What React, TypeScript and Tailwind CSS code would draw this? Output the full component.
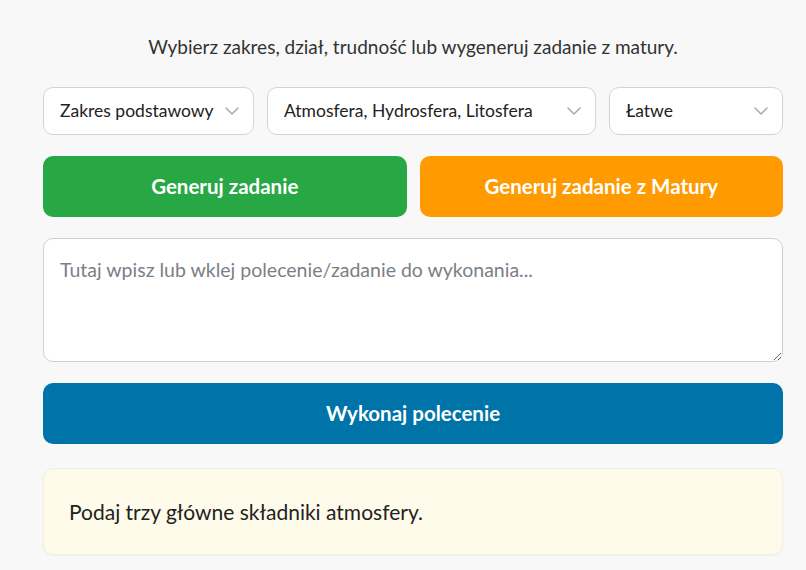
import { ChevronDown } from "lucide-react";

const font = { fontFamily: 'Lato, "Open Sans", sans-serif' };

function Select({ value, options, className }: { value: string; options: string[]; className: string }) {
  return (
    <div className={`relative ${className}`}>
      <select
        defaultValue={value}
        className="h-12 w-full appearance-none rounded-[10px] border border-[#d4d4d4] bg-white pl-4 pr-2 text-[17.5px] text-[#222] outline-none"
      >
        {options.map((o) => (
          <option key={o}>{o}</option>
        ))}
      </select>
      <ChevronDown
        className="pointer-events-none absolute right-[10px] top-1/2 h-6 w-6 -translate-y-1/2 text-[#a8a8a8]"
        strokeWidth={1.5}
      />
    </div>
  );
}

export default function App() {
  return (
    <div className="min-h-[570px] w-full bg-[#f8f8f8] pl-[43px] pr-[23px] pt-[34px]" style={font}>
      <div className="flex w-[740px] flex-col">
        <p className="text-center text-[19px] leading-[26px] text-[#333]">
          Wybierz zakres, dział, trudność lub wygeneruj zadanie z matury.
        </p>

        <div className="mt-[27px] flex gap-[13px]">
          <Select className="w-[211px]" value="Zakres podstawowy" options={["Zakres podstawowy", "Zakres rozszerzony"]} />
          <Select
            className="w-[329px]"
            value="Atmosfera, Hydrosfera, Litosfera"
            options={["Atmosfera, Hydrosfera, Litosfera"]}
          />
          <Select className="flex-1" value="Łatwe" options={["Łatwe", "Średnie", "Trudne"]} />
        </div>

        <div className="mt-[21px] flex gap-[13px]">
          <button className="h-[61px] flex-1 rounded-[10px] bg-[#28a745] text-[20.5px] font-bold text-white">
            Generuj zadanie
          </button>
          <button className="h-[61px] flex-1 rounded-[10px] bg-[#ff9a00] text-[20.5px] font-bold text-white">
            Generuj zadanie z Matury
          </button>
        </div>

        <textarea
          className="mt-[21px] h-[124px] w-full rounded-[10px] border border-[#d0d0d0] bg-white px-4 py-[18px] text-[19.5px] leading-[26px] text-[#222] outline-none placeholder:text-[#7a7f87]"
          placeholder="Tutaj wpisz lub wklej polecenie/zadanie do wykonania..."
        />

        <button className="mt-[21px] h-[61px] w-full rounded-[10px] bg-[#0073a8] text-[20.5px] font-bold text-white">
          Wykonaj polecenie
        </button>

        <div className="mt-[24px] flex h-[87px] items-center rounded-[10px] border border-[#f1eee2] bg-[#fffbea] px-[25px] shadow-[0_1px_2px_rgba(0,0,0,0.04)]">
          <p className="text-[21px] text-[#222]">Podaj trzy główne składniki atmosfery.</p>
        </div>
      </div>
    </div>
  );
}
